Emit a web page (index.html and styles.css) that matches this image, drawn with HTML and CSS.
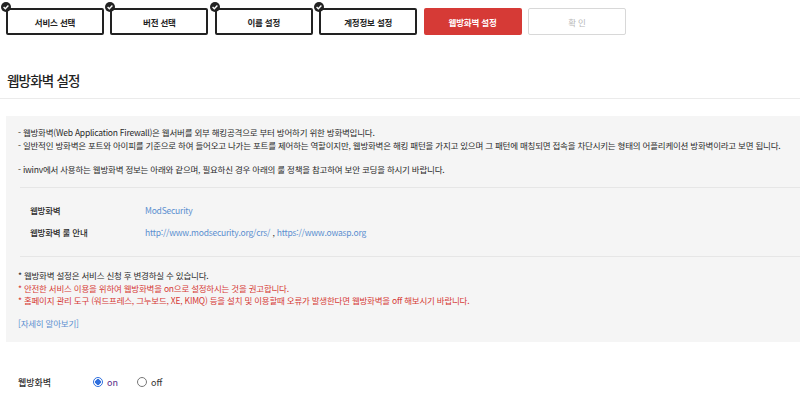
FILE: index.html
```html
<!DOCTYPE html>
<html lang="ko">
<head>
<meta charset="utf-8">
<link rel="stylesheet" href="styles.css">
</head>
<body>
<div class="steps">
  <div class="step done"><span class="chk"><svg viewBox="0 0 10 10" width="10" height="10"><circle cx="5" cy="5" r="5" fill="#222"/><path d="M2.6 5.1 L4.3 6.7 L7.4 3.5" stroke="#fff" stroke-width="1.4" fill="none"/></svg></span>서비스 선택</div>
  <div class="step done"><span class="chk"><svg viewBox="0 0 10 10" width="10" height="10"><circle cx="5" cy="5" r="5" fill="#222"/><path d="M2.6 5.1 L4.3 6.7 L7.4 3.5" stroke="#fff" stroke-width="1.4" fill="none"/></svg></span>버전 선택</div>
  <div class="step done"><span class="chk"><svg viewBox="0 0 10 10" width="10" height="10"><circle cx="5" cy="5" r="5" fill="#222"/><path d="M2.6 5.1 L4.3 6.7 L7.4 3.5" stroke="#fff" stroke-width="1.4" fill="none"/></svg></span>이름 설정</div>
  <div class="step done"><span class="chk"><svg viewBox="0 0 10 10" width="10" height="10"><circle cx="5" cy="5" r="5" fill="#222"/><path d="M2.6 5.1 L4.3 6.7 L7.4 3.5" stroke="#fff" stroke-width="1.4" fill="none"/></svg></span>계정정보 설정</div>
  <div class="step active">웹방화벽 설정</div>
  <div class="step todo">확 인</div>
</div>

<h2 class="title">웹방화벽 설정</h2>

<div class="infobox">
  <p class="line">- 웹방화벽(Web Application Firewall)은 웹서버를 외부 해킹공격으로 부터 방어하기 위한 방화벽입니다.</p>
  <p class="line">- 일반적인 방화벽은 포트와 아이피를 기준으로 하여 들어오고 나가는 포트를 제어하는 역할이지만, 웹방화벽은 해킹 패턴을 가지고 있으며 그 패턴에 매칭되면 접속을 차단시키는 형태의 어플리케이션 방화벽이라고 보면 됩니다.</p>
  <p class="line gap">- iwinv에서 사용하는 웹방화벽 정보는 아래와 같으며, 필요하신 경우 아래의 룰 정책을 참고하여 보안 코딩을 하시기 바랍니다.</p>

  <div class="inner">
    <div class="row"><span class="k">웹방화벽</span><span class="v">ModSecurity</span></div>
    <div class="row"><span class="k">웹방화벽 룰 안내</span><span class="v">http://www.modsecurity.org/crs/ <span class="dark">,</span> https://www.owasp.org</span></div>
  </div>

  <div class="notes">
    <p class="line">* 웹방화벽 설정은 서비스 신청 후 변경하실 수 있습니다.</p>
    <p class="line red">* 안전한 서비스 이용을 위하여 웹방화벽을 on으로 설정하시는 것을 권고합니다.</p>
    <p class="line red">* 홈페이지 관리 도구 (워드프레스, 그누보드, XE, KIMQ) 등을 설치 및 이용할때 오류가 발생한다면 웹방화벽을 off 해보시기 바랍니다.</p>
    <p class="more">[자세히 알아보기]</p>
  </div>
</div>

<div class="setting">
  <span class="label">웹방화벽</span>
  <span class="opt"><span class="radio on"></span><span class="ontext">on</span></span>
  <span class="opt"><span class="radio"></span><span>off</span></span>
</div>
</body>
</html>
```

FILE: styles.css
```css
* { box-sizing: border-box; }
html, body { margin: 0; padding: 0; background: #fff; }
body {
  font-family: "Noto Sans CJK KR", "Noto Sans", sans-serif;
  color: #333;
  overflow: hidden;
  width: 800px;
}
p { margin: 0; }

.steps {
  display: flex;
  gap: 6.4px;
  padding: 8px 0 0 6px;
}
.step {
  position: relative;
  width: 98px;
  height: 27px;
  border: 2px solid #222;
  border-radius: 2px;
  display: flex;
  align-items: center;
  justify-content: center;
  font-size: 8.5px;
  letter-spacing: -0.2px;
  font-weight: 700;
  color: #222;
  background: #fff;
}
.step.active {
  background: #d63a36;
  border-color: #d63a36;
  color: #fff;
  font-weight: 700;
}
.step.todo {
  border: 1px solid #d8d8d8;
  color: #b8b8b8;
  font-weight: 400;
}
.chk {
  position: absolute;
  left: -7px;
  top: -8px;
  width: 10px;
  height: 10px;
  display: block;
  line-height: 0;
}

.title {
  margin: 35px 0 0 0;
  padding: 0 0 8px 7px;
  font-size: 13.5px;
  letter-spacing: -0.8px;
  font-weight: 500;
  color: #222;
  line-height: 20px;
  border-bottom: 1px solid #ebebeb;
}

.infobox {
  margin: 17px 0 0 6px;
  background: #f5f5f5;
  padding: 10px 0 12px 12px;
}
.line {
  font-size: 8.5px;
  letter-spacing: -0.22px;
  line-height: 13px;
  color: #2a2a2a;
  white-space: nowrap;
}
.line.gap { margin-top: 11px; }
.inner {
  margin: 11px 0 0 2px;
  border-top: 1px solid #e6e6e6;
  border-bottom: 1px solid #e6e6e6;
  padding: 11px 0 13px 10px;
}
.row {
  display: flex;
  font-size: 8.5px;
  letter-spacing: -0.22px;
  line-height: 22px;
}
.row .k { width: 115px; color: #2a2a2a; font-weight: 500; }
.row .v { color: #5b8fd0; }
.row .v .dark { color: #333; }
.notes { padding-top: 12px; }
.notes .line { line-height: 12.5px; }
.line.red { color: #d63a36; }
.more {
  margin-top: 10px;
  font-size: 8.5px;
  letter-spacing: -0.22px;
  line-height: 13px;
  color: #5b8fd0;
}

.setting {
  display: flex;
  align-items: center;
  margin-top: 34px;
  padding-left: 18px;
  font-size: 9px;
  line-height: 13px;
  color: #333;
}
.setting .label { width: 75px; font-weight: 500; }
.opt {
  display: flex;
  align-items: center;
  gap: 4px;
  margin-right: 19px;
}
.radio {
  width: 10px;
  height: 10px;
  border-radius: 50%;
  border: 1px solid #777;
  background: #fff;
  display: inline-block;
}
.radio.on {
  border-color: #2f6fdd;
  background: radial-gradient(circle, #2f6fdd 0 2.6px, #fff 3px);
}
.ontext { color: #5b2a86; }
```
